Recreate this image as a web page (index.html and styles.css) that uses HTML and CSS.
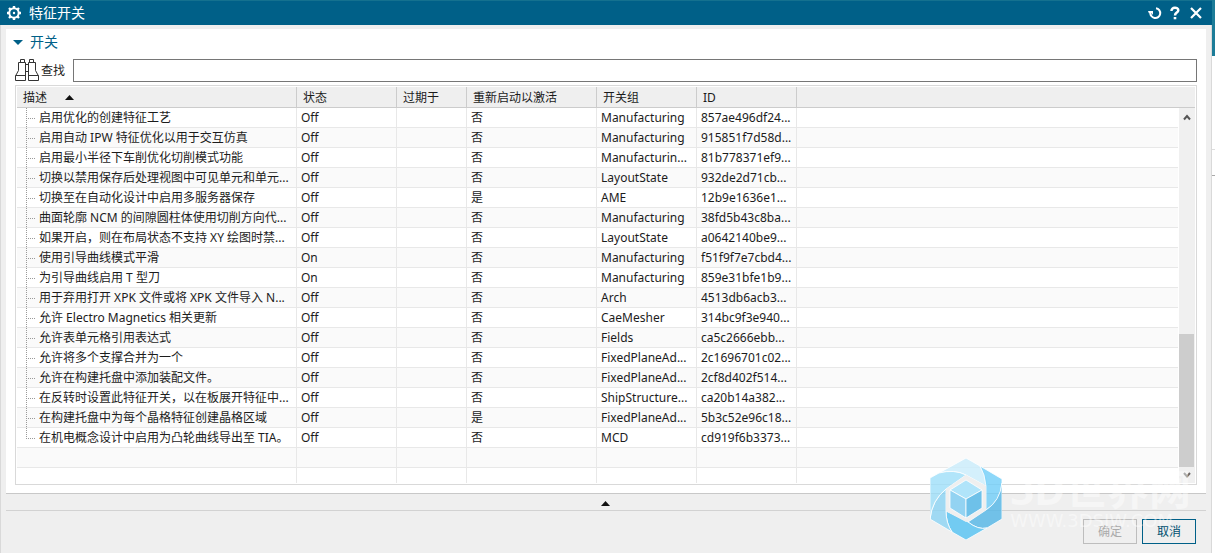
FILE: index.html
```html
<!DOCTYPE html>
<html lang="zh-CN">
<head>
<meta charset="utf-8">
<title>特征开关</title>
<link rel="stylesheet" href="styles.css">
</head>
<body>
<main class="stage">
<section class="dialog">
  <header class="titlebar">
    <svg width="16" height="16" viewBox="0 0 16 16"><circle cx="8" cy="8" r="4.700" fill="none" stroke="#fff" stroke-width="2"/><path stroke="#fff" stroke-width="2.400" d="M8 1v2.500M8 12.500V15M1 8h2.500M12.500 8H15M3 3l1.800 1.800M11.200 11.200L13 13M3 13l1.800-1.800M11.200 4.800L13 3"/><circle cx="8" cy="8" r="1.200" fill="#fff"/></svg>
    <h1>特征开关</h1>
    <div class="tools">
      <button aria-label="重置"><svg width="14" height="14" viewBox="0 0 14 14"><path fill="none" stroke="#fff" stroke-width="2" d="M8 2.300a4.900 4.900 0 11-5.500 4"/><path fill="#fff" d="M0 5h5v4L3.500 7 1 7.500z"/></svg></button>
      <button aria-label="帮助"><svg width="10" height="14" viewBox="0 0 10 14"><path fill="none" stroke="#fff" stroke-width="2.500" d="M1.500 5C1.200.7 8.300.7 8.300 4.200 8.300 6.700 5 6.500 5 9.500"/><path fill="#fff" d="M3.700 11h2.600v2.300H3.700z"/></svg></button>
      <button aria-label="关闭"><svg width="12" height="12" viewBox="0 0 12 12"><path stroke="#fff" stroke-width="2.200" d="M1 1l10 10M11 1L1 11"/></svg></button>
    </div>
  </header>
  <div class="panel">
    <button class="section"><svg width="10" height="5" viewBox="0 0 10 5"><path fill="#006088" d="M0 0h10L5 5z"/></svg><span>开关</span></button>
    <div class="search">
      <svg width="24" height="23" viewBox="0 0 24 23"><path fill="none" stroke="#333" d="M5.500 3.500v-3h4v3M14.500 3.500v-3h4v3M10.500 17.500v-14h-7v8l-3 5.500v4.500h10v-5H.5M13.500 17.500v-14h7v8l3 5.500v4.500h-10v-5h10M10.500 5.500h3M10.500 12.500h3"/></svg>
      <label for="find">查找</label><input id="find" type="text">
    </div>
    <div class="grid">
      <div class="clip">
      <table>
        <colgroup><col class="c1"><col class="c2"><col class="c3"><col class="c4"><col class="c5"><col class="c6"><col></colgroup>
        <thead><tr><th>描述<svg class="sort" width="9" height="5" viewBox="0 0 9 5"><path fill="#111" d="M0 5h9L4.500 0z"/></svg></th><th>状态</th><th>过期于</th><th>重新启动以激活</th><th>开关组</th><th>ID</th><th></th></tr></thead>
        <tbody>
          <tr class="item"><td>启用优化的创建特征工艺</td><td>Off</td><td></td><td>否</td><td>Manufacturing</td><td>857ae496df24...</td><td></td></tr>
          <tr class="item"><td>启用自动 IPW 特征优化以用于交互仿真</td><td>Off</td><td></td><td>否</td><td>Manufacturing</td><td>915851f7d58d...</td><td></td></tr>
          <tr class="item"><td>启用最小半径下车削优化切削模式功能</td><td>Off</td><td></td><td>否</td><td>Manufacturin...</td><td>81b778371ef9...</td><td></td></tr>
          <tr class="item"><td>切换以禁用保存后处理视图中可见单元和单元...</td><td>Off</td><td></td><td>否</td><td>LayoutState</td><td>932de2d71cb...</td><td></td></tr>
          <tr class="item"><td>切换至在自动化设计中启用多服务器保存</td><td>Off</td><td></td><td>是</td><td>AME</td><td>12b9e1636e1...</td><td></td></tr>
          <tr class="item"><td>曲面轮廓 NCM 的间隙圆柱体使用切削方向代...</td><td>Off</td><td></td><td>否</td><td>Manufacturing</td><td>38fd5b43c8ba...</td><td></td></tr>
          <tr class="item"><td>如果开启，则在布局状态不支持 XY 绘图时禁...</td><td>Off</td><td></td><td>否</td><td>LayoutState</td><td>a0642140be9...</td><td></td></tr>
          <tr class="item"><td>使用引导曲线模式平滑</td><td>On</td><td></td><td>否</td><td>Manufacturing</td><td>f51f9f7e7cbd4...</td><td></td></tr>
          <tr class="item"><td>为引导曲线启用 T 型刀</td><td>On</td><td></td><td>否</td><td>Manufacturing</td><td>859e31bfe1b9...</td><td></td></tr>
          <tr class="item"><td>用于弃用打开 XPK 文件或将 XPK 文件导入 N...</td><td>Off</td><td></td><td>否</td><td>Arch</td><td>4513db6acb3...</td><td></td></tr>
          <tr class="item"><td>允许 Electro Magnetics 相关更新</td><td>Off</td><td></td><td>否</td><td>CaeMesher</td><td>314bc9f3e940...</td><td></td></tr>
          <tr class="item"><td>允许表单元格引用表达式</td><td>Off</td><td></td><td>否</td><td>Fields</td><td>ca5c2666ebb...</td><td></td></tr>
          <tr class="item"><td>允许将多个支撑合并为一个</td><td>Off</td><td></td><td>否</td><td>FixedPlaneAd...</td><td>2c1696701c02...</td><td></td></tr>
          <tr class="item"><td>允许在构建托盘中添加装配文件。</td><td>Off</td><td></td><td>否</td><td>FixedPlaneAd...</td><td>2cf8d402f514...</td><td></td></tr>
          <tr class="item"><td>在反转时设置此特征开关，以在板展开特征中...</td><td>Off</td><td></td><td>否</td><td>ShipStructure...</td><td>ca20b14a382...</td><td></td></tr>
          <tr class="item"><td>在构建托盘中为每个晶格特征创建晶格区域</td><td>Off</td><td></td><td>是</td><td>FixedPlaneAd...</td><td>5b3c52e96c18...</td><td></td></tr>
          <tr class="item last"><td>在机电概念设计中启用为凸轮曲线导出至 TIA。</td><td>Off</td><td></td><td>否</td><td>MCD</td><td>cd919f6b3373...</td><td></td></tr>
          <tr><td></td><td></td><td></td><td></td><td></td><td></td><td></td></tr>
          <tr><td></td><td></td><td></td><td></td><td></td><td></td><td></td></tr>
        </tbody>
      </table>
      </div>
      <div class="scroll"><svg width="8" height="7" viewBox="0 0 8 7"><path fill="none" stroke="#555" stroke-width="2" d="M1 5.500l3-3.500 3 3.500"/></svg><div class="track"><div class="thumb"></div></div><svg width="8" height="7" viewBox="0 0 8 7"><path fill="none" stroke="#666" stroke-width="2" d="M1 1l3 3.500L7 1"/></svg></div>
    </div>
  </div>
  <button class="collapse" aria-label="收起"><svg width="9" height="5" viewBox="0 0 9 5"><path fill="#111" d="M0 5h9L4.500 0z"/></svg></button>
  <footer><button disabled>确定</button><button class="cancel">取消</button></footer>
</section>
<div class="behind"><div class="behind-bar"></div><div class="behind-tab"></div></div>
<div class="watermark">
  <svg width="72" height="82" viewBox="0 0 72 82">
    <g stroke="#fff" stroke-width="1" stroke-opacity=".8">
    <path fill="#c9ecfb" fill-opacity=".8" d="M36 0L50 8Q61 20 56 33V28L36 17Q24 11 9 15z"/>
    <path fill="#6fcdf8" fill-opacity=".8" d="M50 8L72 21V25Q71 43 56 52V28Q55 16 50 8z"/>
    <path fill="#5bb8e6" fill-opacity=".85" d="M72 25V61L57 70Q48 72 38 64L56 52Q70 43 72 25z"/>
    <path fill="#5cc4f2" fill-opacity=".85" d="M57 70L36 82 22 74Q16 65 16 53L38 64Q48 72 57 70z"/>
    <path fill="#8bd3f4" fill-opacity=".8" d="M22 74L0 61Q2 42 16 31V53Q16 65 22 74z"/>
    <path fill="#9edff9" fill-opacity=".8" d="M0 61V20L9 15Q24 11 36 17L16 31Q2 42 0 61z"/>
    <path fill="#efefef" stroke="none" d="M36 17L56 28V52L36 64 16 53V31z"/>
    <path fill="#b0e4fa" d="M36 22L52 32 36 41 20 32z"/>
    <path fill="#93d3f2" d="M20 32L36 41V60L20 50z"/>
    <path fill="#6ec1e9" d="M52 32L36 41V60L52 50z"/>
    </g>
  </svg>
  <div class="brand"><span class="name">3D世界网</span><span class="site">WWW.3DSJW.COM</span></div>
</div>
</main>
</body>
</html>
```
FILE: styles.css
```css
* { box-sizing: border-box; }
body { margin: 0; font: 12px/20px "Noto Sans", "Noto Sans CJK SC", sans-serif; color: #1c1c1c; }
button { font: inherit; border: 0; padding: 0; background: none; }
svg { display: block; flex: none; }
.stage { display: flex; height: 100vh; overflow: hidden; position: relative; }
.dialog { flex: 1; min-width: 0; display: flex; flex-direction: column; background: #efefef; border-left: 1px solid #d9d9d9; border-right: 1px solid #d9d9d9; }
.titlebar { height: 25px; flex: none; display: flex; align-items: center; gap: 7px; margin: 0 -1px; padding: 0 10px 0 6px; background: #006088; border-top: 1px solid #14718f; color: #fff; }
h1 { margin: 0; font-size: 14px; font-weight: 400; }
.tools { margin-left: auto; display: flex; align-items: center; gap: 8px; }
.tools button:last-child { margin-left: 2px; }

.panel { flex: 1; min-height: 0; display: flex; flex-direction: column; margin: 4px 5px 0; padding: 3px 9px 8px; background: #fff; border-bottom: 1px solid #c8c8c8; }
.section { display: flex; align-items: center; gap: 7px; height: 20px; font-size: 14px; color: #006088; margin-left: -2px; align-self: flex-start; }
.search { display: flex; align-items: center; margin-top: 7px; flex: none; }
.search label { margin-left: 2px; }
.search input { flex: 1; min-width: 0; height: 23px; margin-left: 8px; border: 1px solid #767676; font: inherit; }

.grid { flex: 1; min-height: 0; margin-top: 3px; padding: 1px; border: 1px solid #d9d9d9; position: relative; }
.clip { height: 100%; overflow: hidden; }
table { width: 100%; table-layout: fixed; border-collapse: separate; border-spacing: 0; }
.c1 { width: 280px; }
.c2, .c5, .c6 { width: 100px; }
.c3 { width: 70px; }
.c4 { width: 130px; }
th { height: 21px; padding: 2px 6px 0; background: #efefef; font-weight: 400; text-align: left; line-height: 18px; border-right: 1px solid #ccc; border-bottom: 1px solid #ccc; white-space: nowrap; }
th:last-child, td:last-child { border-right: 0; }
.sort { display: inline-block; margin-left: 18px; vertical-align: 2px; }
td { height: 20px; padding: 0 4px; line-height: 19px; border-right: 1px solid #e8e8e8; border-bottom: 1px solid #e8e8e8; white-space: nowrap; overflow: hidden; text-overflow: clip; }
tbody tr:nth-child(even) td { background-color: #fafafa; }
td:first-child { padding-left: 22px; padding-right: 0; }
tbody .item td:first-child {
  background-image: repeating-linear-gradient(#999 0 1px, transparent 1px 2px), repeating-linear-gradient(90deg, #999 0 1px, transparent 1px 2px);
  background-size: 1px 20px, 8px 1px;
  background-position: 9px 0, 11px 10px;
  background-repeat: no-repeat;
}
tbody .last td:first-child { background-size: 1px 11px, 8px 1px; }

.scroll { position: absolute; right: 1px; top: 22px; bottom: 1px; width: 17px; border-left: 1px solid #fff; background: #f0f0f0; display: flex; flex-direction: column; align-items: center; padding: 6px 1px 4px 0; }
.track { flex: 1; width: 100%; display: flex; align-items: flex-end; padding: 5px 0; }
.thumb { width: 100%; height: 39%; background: #cdcdcd; }

.collapse { height: 17px; flex: none; display: flex; align-items: center; justify-content: center; margin: 0 5px; padding: 3px 2px 0 0; border-bottom: 1px solid #d2d2d2; }
footer { flex: none; display: flex; justify-content: flex-end; gap: 5px; padding: 8px 15px 9px; }
footer button { width: 54px; height: 25px; border: 1px solid #bdbdbd; color: #aaa; }
footer .cancel { border-color: #006088; color: #004f70; }

.behind { width: 3px; background: #fff; }
.behind-bar { height: 56px; background: #1c7c98; }
.behind-tab { height: 120px; border-bottom: 1px solid #aaa; background: linear-gradient(#ddd, #ddd) 0 93px / 3px 1px no-repeat; }

.watermark { position: absolute; right: 24px; bottom: 13px; display: flex; align-items: center; gap: 8px; color: #fff; pointer-events: none; }
.brand { display: flex; flex-direction: column; opacity: .45; }
.name { font: 700 42px/44px "Noto Sans", "Noto Sans CJK SC", sans-serif; }
.site { font: 400 18px/20px "DejaVu Sans", sans-serif; }
```
